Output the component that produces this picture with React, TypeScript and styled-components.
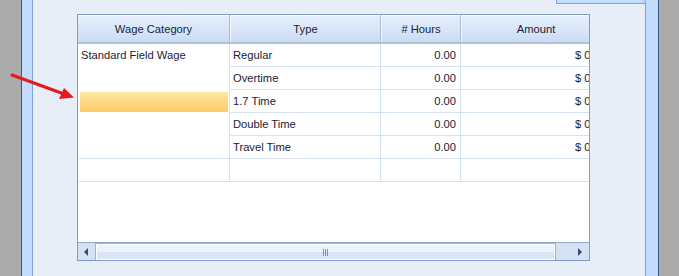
import React from "react";
import styled, { createGlobalStyle } from "styled-components";

const GlobalStyle = createGlobalStyle`
  html, body {
    margin: 0;
    padding: 0;
    background: #ababab;
  }
  body {
    font-family: "Liberation Sans", Arial, sans-serif;
    font-size: 11.2px;
    color: #1b1b33;
  }
`;

const Screen = styled.div`
  position: relative;
  width: 679px;
  height: 276px;
  display: flex;
  overflow: hidden;
`;

const Gutter = styled.div`
  width: 21px;
  flex-shrink: 0;
`;

const Frame = styled.div`
  display: flex;
  background: #c1dcfc;
  border-left: 1px solid #355a8c;
  border-right: 1px solid #355a8c;
  padding: 0 12px 0 10px;
`;

const Panel = styled.div`
  width: 614px;
  display: flex;
  flex-direction: column;
`;

const TabStrip = styled.div`
  display: flex;
  height: 4px;
`;

const Tab = styled.div`
  width: 523px;
  background: #e8eef8;
  border-left: 1px solid #7fa3d0;
  border-right: 1px solid #7fa3d0;
`;

const TabRest = styled.div`
  flex: 1;
  border-bottom: 1px solid #7fa3d0;
  border-right: 1px solid #7fa3d0;
  border-top-right-radius: 3px;
`;

const PanelBody = styled.div`
  flex: 1;
  background: #e8eef8;
  border-left: 1px solid #7fa3d0;
  border-right: 1px solid #7fa3d0;
  padding: 10px 0 0 44px;
`;

const Grid = styled.div`
  width: 511px;
  height: 245px;
  border: 1px solid #7d9dc6;
  background: #fff;
  display: flex;
  flex-direction: column;
  overflow: hidden;
`;

const COLS = "152px 151px 80px 150px";

const HeaderRow = styled.div`
  display: grid;
  grid-template-columns: ${COLS};
  height: 27px;
  border-bottom: 2px solid #b0c3da;
  background: linear-gradient(#e6effb, #d9e6f8 50%, #c9dcf5);
  box-shadow: inset 0 1px 0 #ffffff;
`;

const HeaderCell = styled.div<{ $first?: boolean }>`
  display: flex;
  align-items: center;
  justify-content: center;
  border-right: 1px solid #a8bcd4;
  border-left: ${(p) => (p.$first ? "none" : "1px solid #f4f8fd")};
  color: #1d1d3a;
`;

const Row = styled.div`
  display: grid;
  grid-template-columns: ${COLS};
  height: 23px;
`;

const Cell = styled.div<{ $right?: boolean; $line?: boolean }>`
  display: flex;
  align-items: center;
  justify-content: ${(p) => (p.$right ? "flex-end" : "flex-start")};
  padding: ${(p) => (p.$right ? "0 4px 0 0" : "0 0 0 3px")};
  border-right: 1px solid #d3e1f2;
  border-bottom: ${(p) => (p.$line === false ? "1px solid transparent" : "1px solid #d3e1f2")};
  white-space: nowrap;
  overflow: hidden;
`;

const Selected = styled.div`
  margin: 1px 1px 0 -1px;
  width: 100%;
  height: 20px;
  background: linear-gradient(#ffe8a6, #fdd77f 55%, #fccc6a);
`;

const Filler = styled.div`
  flex: 1;
`;

const ScrollBar = styled.div`
  height: 17px;
  display: flex;
  border-top: 1px solid #8eaad0;
  background: #d3e1f4;
`;

const ScrollButton = styled.div<{ $w: number; $shift?: number }>`
  width: ${(p) => p.$w}px;
  flex-shrink: 0;
  display: flex;
  align-items: center;
  justify-content: center;
  padding-left: ${(p) => p.$shift ?? 0}px;
  box-sizing: border-box;
`;

const Thumb = styled.div`
  width: 457px;
  margin: 1px 0 0 1px;
  height: 14px;
  border: 1px solid #ffffff;
  outline: 1px solid #9db3d2;
  background: linear-gradient(#edf3fc 50%, #d9e5f5 50%);
  display: flex;
  align-items: center;
  justify-content: center;
  gap: 1px;
`;

const Grip = styled.span`
  width: 1px;
  height: 7px;
  background: #7f93ad;
`;

const Pointer = styled.svg`
  position: absolute;
  left: 0;
  top: 0;
`;

type WageRow = {
  category?: React.ReactNode;
  line: boolean;
  type: string;
  hours: string;
  amount: string;
};

const rows: WageRow[] = [
  { category: "Standard Field Wage", line: false, type: "Regular", hours: "0.00", amount: "$ 0.00" },
  { line: false, type: "Overtime", hours: "0.00", amount: "$ 0.00" },
  { category: <Selected />, line: false, type: "1.7 Time", hours: "0.00", amount: "$ 0.00" },
  { line: false, type: "Double Time", hours: "0.00", amount: "$ 0.00" },
  { line: true, type: "Travel Time", hours: "0.00", amount: "$ 0.00" },
  { line: true, type: "", hours: "", amount: "" },
];

export default function App() {
  return (
    <>
      <GlobalStyle />
      <Screen>
        <Gutter />
        <Frame>
          <Panel>
            <TabStrip>
              <Tab />
              <TabRest />
            </TabStrip>
            <PanelBody>
              <Grid>
                <HeaderRow>
                  <HeaderCell $first>Wage Category</HeaderCell>
                  <HeaderCell>Type</HeaderCell>
                  <HeaderCell># Hours</HeaderCell>
                  <HeaderCell>Amount</HeaderCell>
                </HeaderRow>
                {rows.map((r, i) => (
                  <Row key={i}>
                    <Cell $line={r.line}>{r.category}</Cell>
                    <Cell>{r.type}</Cell>
                    <Cell $right>{r.hours}</Cell>
                    <Cell $right>{r.amount}</Cell>
                  </Row>
                ))}
                <Filler />
                <ScrollBar>
                  <ScrollButton $w={17}>
                    <svg width="5" height="8" viewBox="0 0 5 8">
                      <path d="M4 0 L0 4 L4 8 Z" fill="#3a4a63" />
                    </svg>
                  </ScrollButton>
                  <Thumb>
                    <Grip />
                    <Grip />
                    <Grip />
                  </Thumb>
                  <ScrollButton $w={34} $shift={14}>
                    <svg width="5" height="8" viewBox="0 0 5 8">
                      <path d="M1 0 L5 4 L1 8 Z" fill="#3a4a63" />
                    </svg>
                  </ScrollButton>
                </ScrollBar>
              </Grid>
            </PanelBody>
          </Panel>
        </Frame>
      </Screen>
      <Pointer width="80" height="105" viewBox="0 0 80 105">
        <line x1="12" y1="75" x2="64" y2="94" stroke="#e51a1a" strokeWidth="3" strokeLinecap="round" />
        <polygon points="74,97.5 59,99 64,88" fill="#e51a1a" />
      </Pointer>
    </>
  );
}
